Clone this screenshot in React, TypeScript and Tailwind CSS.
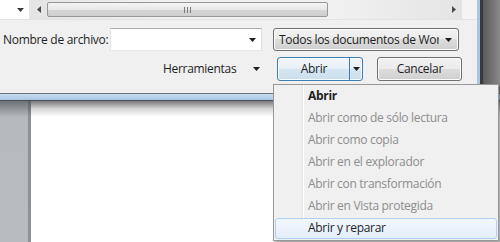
const font = { fontFamily: '"Open Sans", "Noto Sans", sans-serif' };

const Arrow = ({ dir = "down", className = "" }: { dir?: "down" | "left" | "right"; className?: string }) => {
  const pts = dir === "down" ? "0,0 7,0 3.5,4" : dir === "left" ? "4,0 4,7 0,3.5" : "0,0 0,7 4,3.5";
  const w = dir === "down" ? 7 : 4;
  const h = dir === "down" ? 4 : 7;
  return (
    <svg width={w} height={h} viewBox={`0 0 ${w} ${h}`} className={className}>
      <polygon points={pts} fill="currentColor" />
    </svg>
  );
};

const menuItems = [
  { label: "Abrir", bold: true },
  { label: "Abrir como de sólo lectura" },
  { label: "Abrir como copia" },
  { label: "Abrir en el explorador" },
  { label: "Abrir con transformación" },
  { label: "Abrir en Vista protegida" },
  { label: "Abrir y reparar", hover: true },
];

const face =
  "rounded-[3px] border border-[#707070] bg-[linear-gradient(to_bottom,#f2f2f2_0%,#ebebeb_50%,#dddddd_50%,#cfcfcf_100%)] shadow-[inset_0_0_0_1px_#fcfcfc] flex items-center text-[12px] text-[#1e1e1e]";

export default function App() {
  return (
    <div className="relative w-[500px] h-[242px] overflow-hidden bg-white tracking-[-0.3px]" style={font}>
      <div className="flex flex-col h-full">
        {/* dialog */}
        <div className="flex h-[93px]">
          <div className="w-[477px] flex flex-col bg-[#f0f0f0]">
            {/* scroll strip */}
            <div className="flex h-[20px] border-b border-[#e3e3e3]">
              <div className="w-[29px] bg-white flex items-center justify-end pr-[5px] text-[#3b3b3b]">
                <Arrow />
              </div>
              <div className="w-[2px] bg-[#e6e6e6]" />
              <div className="flex-1 flex items-center bg-[linear-gradient(to_right,#e4e4e4,#f1f1f1_30%,#f1f1f1_70%,#e4e4e4)]">
                <div className="w-[16px] flex justify-center text-[#4a4a4a]">
                  <Arrow dir="left" />
                </div>
                <div className="w-[281px] h-[15px] rounded-[2px] border border-[#979797] bg-[linear-gradient(to_bottom,#f4f4f4,#e8e8e8_50%,#d6d6d6_51%,#cfcfcf)] flex items-center justify-center">
                  <div className="flex gap-[2px]">
                    <div className="w-[1px] h-[6px] bg-[#7a7a7a]" />
                    <div className="w-[1px] h-[6px] bg-[#7a7a7a]" />
                    <div className="w-[1px] h-[6px] bg-[#7a7a7a]" />
                  </div>
                </div>
                <div className="flex-1" />
                <div className="w-[16px] flex justify-center text-[#4a4a4a]">
                  <Arrow dir="right" />
                </div>
              </div>
              <div className="w-[15px] bg-[#f4f4f4]" />
            </div>

            {/* file name row */}
            <div className="flex items-center mt-[8px] h-[23px]">
              <div className="w-[110px] pl-[3px] text-[12px] text-[#1e1e1e] whitespace-nowrap">Nombre de archivo:</div>
              <div className="w-[152px] h-[23px] bg-white border border-[#abadb3] border-l-[#e2e3ea] border-r-[#dbdfe6] border-b-[#e3e9ef] flex items-center justify-end pr-[5px] text-[#1e1e1e]">
                <Arrow />
              </div>
              <div className={`${face} ml-[11px] w-[186px] h-[23px] pl-[5px] pr-[6px]`}>
                <span className="whitespace-nowrap overflow-hidden w-[160px]">Todos los documentos de Wor</span>
                <Arrow className="ml-auto" />
              </div>
            </div>

            {/* buttons row */}
            <div className="flex items-center mt-[6px] h-[24px]">
              <div className="ml-[163px] text-[12px] text-[#1e1e1e] whitespace-nowrap">Herramientas</div>
              <div className="ml-[17px] text-[#1e1e1e]">
                <Arrow />
              </div>
              <div className="ml-[17px] w-[86px] h-[24px] flex rounded-[3px] border border-[#3c7fb1] bg-[linear-gradient(to_bottom,#f1f6fa_0%,#e7eff6_50%,#d6e5f1_50%,#cbdeed_100%)] shadow-[inset_0_0_0_1px_#f6fbfe]">
                <div className="flex-1 flex items-center justify-center text-[12px] text-[#1e1e1e]">Abrir</div>
                <div className="w-[13px] border-l border-[#3c7fb1] flex items-center justify-center text-[#1e1e1e]">
                  <Arrow />
                </div>
              </div>
              <div className={`${face} justify-center h-[24px] ml-[14px] w-[85px]`}>Cancelar</div>
            </div>
          </div>
          <div className="w-[3px] bg-[#a9c7e5]" />
          <div className="w-[3px] bg-[#3a3a3a]" />
          <div className="flex-1 bg-[linear-gradient(to_right,#5a5a5a,#888888)]" />
        </div>

        {/* bottom border band */}
        <div className="h-[1px] bg-[#6f7377]" />
        <div className="h-[6px] bg-[linear-gradient(to_bottom,#c9dcf0,#a9c6e6)]" />
        <div className="h-[1px] bg-[#4b4e52]" />

        {/* document area */}
        <div className="flex flex-1">
          <div className="w-[28px] bg-[linear-gradient(to_bottom,#6e7276,#b6babf_16px,#b8bcc1)]" />
          <div className="w-[3px] bg-[linear-gradient(to_bottom,#5d6165,#8e9296_16px,#8e9296)]" />
          <div className="flex-1 bg-[linear-gradient(to_bottom,#7a7a7a,#d8d8d8_8px,#ffffff_16px,#ffffff)]" />
        </div>
      </div>

      {/* split button menu */}
      <div className="absolute left-[273px] top-[84px] w-[226px] h-[157px] border border-[#979797] bg-[#f0f0f0] shadow-[2px_2px_2px_rgba(0,0,0,0.35)] flex">
        <div className="w-[28px] shrink-0" />
        <div className="w-[1px] bg-[#e2e3e3]" />
        <div className="w-[1px] bg-white" />
        <div className="flex-1" />
        <div className="absolute left-0 top-0 w-full flex flex-col">
          {menuItems.map((it) => (
            <div key={it.label} className="relative h-[22px] flex items-center">
              {it.hover && (
                <div className="absolute left-[1px] right-[1px] top-[1px] bottom-0 rounded-[3px] border border-[#aecff7] bg-[linear-gradient(to_bottom,#f2f7fd,#e4eefb)]" />
              )}
              <span
                className={`relative pl-[34px] text-[12px] whitespace-nowrap ${
                  it.bold ? "font-bold text-[#1e1e1e]" : it.hover ? "text-[#1e1e1e]" : "text-[#8d8d8d]"
                }`}
              >
                {it.label}
              </span>
            </div>
          ))}
        </div>
      </div>
    </div>
  );
}
